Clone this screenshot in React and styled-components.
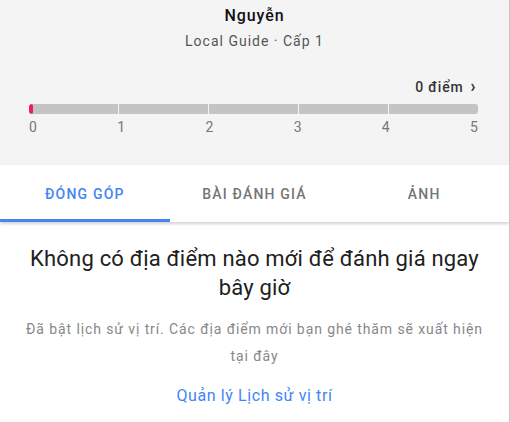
import React from 'react'
import styled, { createGlobalStyle } from 'styled-components'

const GlobalStyle = createGlobalStyle`
  html, body {
    margin: 0;
    padding: 0;
    background: #fff;
  }
  body {
    font-family: Roboto, 'Noto Sans', Arial, sans-serif;
  }
`

const Page = styled.div`
  width: 509px;
  height: 422px;
  border-right: 1px solid #c8c8c8;
  overflow: hidden;
  background: #fff;
`

const Header = styled.div`
  background: #f4f4f4;
  height: 165px;
  box-sizing: border-box;
  padding-top: 6px;
  text-align: center;
`

const Name = styled.div`
  font-size: 16px;
  font-weight: 500;
  letter-spacing: 0.9px;
  color: #111;
  line-height: 20px;
`

const Level = styled.div`
  font-size: 14px;
  letter-spacing: 1px;
  color: #555;
  line-height: 20px;
  margin-top: 5px;
`

const Progress = styled.div`
  margin: 27px 31px 0 29px;
`

const Points = styled.div`
  display: flex;
  justify-content: flex-end;
  align-items: center;
  gap: 7px;
  font-size: 14px;
  font-weight: 500;
  letter-spacing: 0.8px;
  color: #333;
  line-height: 18px;
  padding-right: 1px;
`

const Chevron = styled.span`
  font-size: 19px;
  font-weight: 700;
  transform: scaleX(0.85);
  display: inline-block;
  margin-top: -2px;
`

const Bar = styled.div`
  position: relative;
  display: grid;
  grid-template-columns: repeat(5, 1fr);
  gap: 1px;
  height: 10px;
  margin-top: 8px;
  border-radius: 3px;
  overflow: hidden;
`

const Segment = styled.div`
  background: #c4c4c4;
`

const Fill = styled.div`
  position: absolute;
  left: 0;
  top: 0;
  bottom: 0;
  width: 4px;
  background: #e91e63;
  border-radius: 3px;
`

const Ticks = styled.div`
  display: flex;
  justify-content: space-between;
  margin-top: 5px;
  font-size: 14px;
  color: #777;
  line-height: 16px;
`

const Tick = styled.span`
  width: 8px;
  text-align: center;
`

const Tabs = styled.div`
  display: grid;
  grid-template-columns: repeat(3, 1fr);
  height: 57px;
  background: #fff;
  box-shadow: 0 2px 3px rgba(0, 0, 0, 0.18);
  position: relative;
`

const Tab = styled.div`
  display: flex;
  align-items: center;
  justify-content: center;
  font-size: 14px;
  font-weight: 500;
  letter-spacing: 1.2px;
  color: ${p => (p.$active ? '#4285f4' : '#757575')};
  border-bottom: 3px solid ${p => (p.$active ? '#4285f4' : 'transparent')};
  padding-top: 3px;
`

const Empty = styled.div`
  padding: 22px 22px 0;
  text-align: center;
`

const Title = styled.div`
  font-size: 22px;
  line-height: 29px;
  letter-spacing: 0.2px;
  color: #202020;
  padding: 0 4px;
`

const Note = styled.div`
  margin-top: 14px;
  font-size: 14px;
  line-height: 27px;
  letter-spacing: 0.9px;
  color: #888;
`

const Link = styled.a`
  display: block;
  margin-top: 14px;
  font-size: 16px;
  line-height: 24px;
  letter-spacing: 0.6px;
  color: #4285f4;
  text-decoration: none;
`

const App = () => {
  const ticks = [0, 1, 2, 3, 4, 5]
  return (
    <Page>
      <GlobalStyle />
      <Header>
        <Name>Nguyễn</Name>
        <Level>Local Guide · Cấp 1</Level>
        <Progress>
          <Points>
            0 điểm <Chevron>›</Chevron>
          </Points>
          <Bar>
            {[0, 1, 2, 3, 4].map(i => (
              <Segment key={i} />
            ))}
            <Fill />
          </Bar>
          <Ticks>
            {ticks.map(t => (
              <Tick key={t}>{t}</Tick>
            ))}
          </Ticks>
        </Progress>
      </Header>
      <Tabs>
        <Tab $active>ĐÓNG GÓP</Tab>
        <Tab>BÀI ĐÁNH GIÁ</Tab>
        <Tab>ẢNH</Tab>
      </Tabs>
      <Empty>
        <Title>Không có địa điểm nào mới để đánh giá ngay bây giờ</Title>
        <Note>
          Đã bật lịch sử vị trí. Các địa điểm mới bạn ghé thăm sẽ xuất hiện tại đây
        </Note>
        <Link href="#">Quản lý Lịch sử vị trí</Link>
      </Empty>
    </Page>
  )
}

export default App
